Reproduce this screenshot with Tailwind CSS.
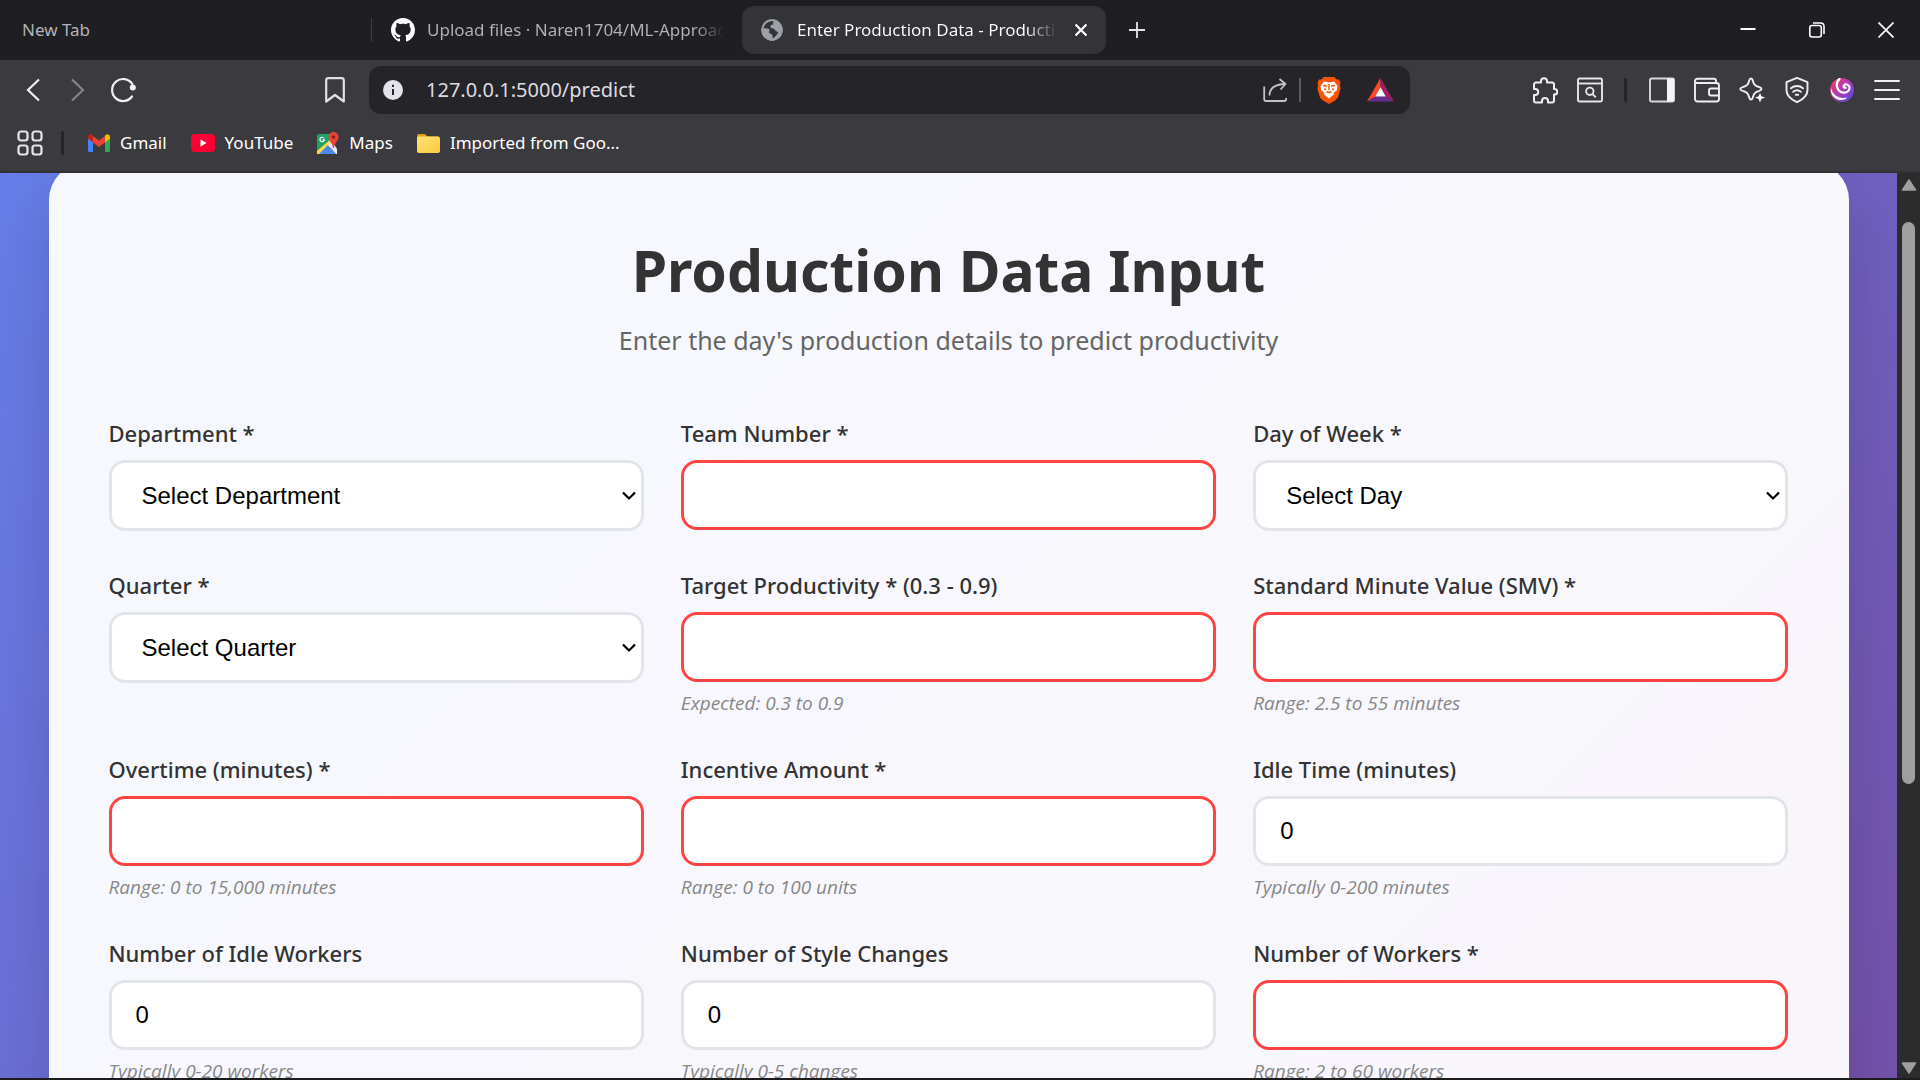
<!DOCTYPE html>
<html lang="en">
<head>
<meta charset="utf-8">
<title>Enter Production Data - Productivity Prediction</title>
<script src="https://cdn.jsdelivr.net/npm/@tailwindcss/browser@4"></script>
</head>
<body class="flex h-screen flex-col overflow-hidden bg-[#1c1c1c] font-['Noto_Sans',sans-serif]">

<!-- Tab strip -->
<header class="shrink-0 text-[17px] text-white">
  <div class="flex h-15 items-center bg-[#1f1e23]">
    <div class="w-[371px] pl-[22px] leading-6 text-[#b4b3b8]">New Tab</div>
    <div class="h-6 w-px bg-[#3f3e44]"></div>
    <div class="flex w-[358px] items-center gap-3 pl-[19px]">
      <svg class="size-6 shrink-0" viewBox="0 0 16 16" fill="#fff"><path d="M8 0C3.58 0 0 3.58 0 8c0 3.54 2.29 6.53 5.47 7.59.4.07.55-.17.55-.38 0-.19-.01-.82-.01-1.49-2.01.37-2.53-.49-2.69-.94-.09-.23-.48-.94-.82-1.13-.28-.15-.68-.52-.01-.53.63-.01 1.08.58 1.23.82.72 1.21 1.87.87 2.33.66.07-.52.28-.87.51-1.07-1.78-.2-3.64-.89-3.64-3.95 0-.87.31-1.59.82-2.15-.08-.2-.36-1.02.08-2.12 0 0 .67-.21 2.2.82.64-.18 1.32-.27 2-.27s1.36.09 2 .27c1.53-1.04 2.2-.82 2.2-.82.44 1.1.16 1.92.08 2.12.51.56.82 1.27.82 2.15 0 3.07-1.87 3.75-3.65 3.95.29.25.54.73.54 1.48 0 1.07-.01 1.93-.01 2.2 0 .21.15.46.55.38A8.01 8.01 0 0 0 16 8c0-4.42-3.58-8-8-8z"/></svg>
      <div class="w-[297px] overflow-hidden bg-linear-to-r from-[#b4b3b8] from-90% to-transparent bg-clip-text leading-6 whitespace-nowrap text-transparent">Upload files · Naren1704/ML-Approach</div>
    </div>
    <div class="ml-3 flex h-12 w-[364px] items-center rounded-xl bg-[#343338] pl-[19px]">
      <svg class="mr-3.5 size-[22px] shrink-0" viewBox="0 0 22 22"><circle cx="11" cy="11" r="10.7" fill="#9aa0a6"/><path d="M13.500 2.600C12 3 11.500 4.500 12.500 5.500c-2.500-.5-3.500 1.500-2.800 3 .8 1.300 3.800.6 4.300 2.600.3 1.500 2.200 1.200 3.200 2.400-1.300 2.500-3 4.500-5 5.800-1.200-.8-.6-2.300-1.200-3.400-.8-1.200-2.600-1-3.200-2.500-.4-1.200.8-2 .4-3C7.700 9.400 5 9.500 2.500 9.300 3 5.500 6.500 2 10.800 2z" fill="#343338"/><path d="M3 9.500c2 .8 4.800.2 5.500 1.200.6 1-.6 1.800-.3 2.800.5 1.400 2.800 1.200 3.300 2.600.4 1.200-.4 2.600.6 3.400-4 1-8-1.800-9.300-5.500z" fill="#9aa0a6" opacity=".55"/><circle cx="11" cy="11" r="9.800" fill="none" stroke="#9aa0a6" stroke-width="1.800"/></svg>
      <div class="w-[260px] overflow-hidden bg-linear-to-r from-white from-88% to-transparent bg-clip-text leading-6 whitespace-nowrap text-transparent">Enter Production Data - Productivity</div>
      <button aria-label="Close tab" class="ml-3 flex size-6 items-center justify-center"><svg class="size-3" viewBox="0 0 12 12" stroke="#fff" stroke-width="2.2"><path d="M.5.5l11 11M11.500.500l-11 11"/></svg></button>
    </div>
    <button aria-label="New tab" class="ml-[19px] flex size-6 items-center justify-center"><svg class="size-4" viewBox="0 0 16 16" stroke="#e6e6ea" stroke-width="1.800"><path d="M8 0v16M0 8h16"/></svg></button>
    <div class="ml-auto flex">
      <button aria-label="Minimize" class="flex h-15 w-[69px] items-center justify-center"><svg class="size-4" viewBox="0 0 16 16" stroke="#fff" stroke-width="2"><path d="M.5 7h15"/></svg></button>
      <button aria-label="Restore" class="flex h-15 w-[69px] items-center justify-center"><svg class="size-4" viewBox="0 0 16 16" fill="none" stroke="#fff" stroke-width="1.600"><rect x=".8" y="3.500" width="11.500" height="11.500" rx="2.200"/><path d="M4 1h7.500C13.500 1 15 2.500 15 4.500V12"/></svg></button>
      <button aria-label="Close" class="flex h-15 w-[69px] items-center justify-center"><svg class="size-4" viewBox="0 0 16 16" stroke="#fff" stroke-width="1.700"><path d="M.5.5l15 15M15.500.500l-15 15"/></svg></button>
    </div>
  </div>

  <!-- Toolbar -->
  <div class="flex h-15 items-center bg-[#3b3a3f] pr-[11px] pl-2.5">
    <button aria-label="Back" class="flex size-[45px] items-center justify-center"><svg class="h-6 w-4" viewBox="0 0 16 24" fill="none" stroke="#f0f0f4" stroke-width="2.200"><path d="M14 1.500L3 12l11 10.500"/></svg></button>
    <button aria-label="Forward" class="flex size-[45px] items-center justify-center"><svg class="h-6 w-4" viewBox="0 0 16 24" fill="none" stroke="#85848a" stroke-width="2.200"><path d="M2 1.500L13 12 2 22.500"/></svg></button>
    <button aria-label="Reload" class="flex size-[45px] items-center justify-center"><svg class="size-[26px]" viewBox="0 0 26 26" fill="none" stroke="#f0f0f4" stroke-width="2.200" stroke-linecap="round"><path d="M22 19.500A11 11 0 1 1 22.300 7"/><circle cx="22.800" cy="10.500" r="3" fill="#f0f0f4" stroke="none"/></svg></button>
    <button aria-label="Bookmark this page" class="ml-[167px] flex size-[45px] items-center justify-center"><svg class="h-[26px] w-5" viewBox="0 0 20 26" fill="none" stroke="#e0e0e6" stroke-width="2.200" stroke-linejoin="round"><path d="M1.200 24.500V3.500A2.300 2.300 0 0 1 3.500 1.200h13a2.300 2.300 0 0 1 2.300 2.300v21L10 18z"/></svg></button>
    <div class="mr-28 ml-3 flex h-12 min-w-0 flex-1 items-center rounded-xl bg-[#252429] pr-4 pl-3.5">
      <svg class="mr-[23px] size-5 shrink-0" viewBox="0 0 20 20"><circle cx="10" cy="10" r="10" fill="#e4e3ea"/><path d="M10 9v6M10 4.800v2.300" stroke="#252429" stroke-width="2"/></svg>
      <input aria-label="Address" type="text" value="127.0.0.1:5000/predict" class="min-w-0 flex-1 bg-transparent text-[20px] leading-7 text-[#dcdce2] outline-none">
      <svg class="size-6 shrink-0" viewBox="0 0 24 24" fill="none" stroke="#c3c2c8" stroke-width="1.800" stroke-linejoin="round"><path d="M1.200 8.500V21a2 2 0 0 0 2 2h18a2 2 0 0 0 2-2v-1M6.500 17.500c0-7 5-11 15-11.500M16.500 1l6 5-5 5.500"/></svg>
      <div class="ml-3 h-6 w-0.5 bg-[#5d5c62]"></div>
      <svg class="ml-4 h-7 w-6 shrink-0" viewBox="0 0 24 28"><path d="M6.500 1h11l2 2.500 2.500 0 1.500 3.500-.5 2 .5 4-2.500 8.500-3 3L12 28l-6-3.500-3-3L.5 13 1 9 .5 7 2 3.500l2.500 0z" fill="#fb5304"/><path d="M7 5.500l5 1 5-1 3.500 4.500-.8 4.500-3 2 .2 2L12 22.500 7.100 18.500l.2-2-3-2L3.500 10z" fill="#fff"/><path d="M6 9.500l4 .8M18 9.500l-4 .8M12 8v6M9.500 15.500l2.500 1.200 2.500-1.200M7 13l2 .5M17 13l-2 .5" stroke="#fb5304" stroke-width="1.400" fill="none"/></svg>
      <svg class="ml-[26px] h-6 w-[27px] shrink-0" viewBox="0 0 27 24"><path d="M13.500 0L0 23.500l8.500-5 5-9z" fill="#ff4724"/><path d="M13.500 0L27 23.500l-8.500-5-5-9z" fill="#9e1f63"/><path d="M0 23.500h27l-8.500-5h-10z" fill="#662d91"/><path d="M13.500 9.200l5.200 9.300H8.300z" fill="#fff"/></svg>
    </div>
    <button aria-label="Extensions" class="flex size-[45px] items-center justify-center"><svg class="size-[27px]" viewBox="0 0 27 27" fill="none" stroke="#efeff3" stroke-width="2" stroke-linejoin="round"><path d="M5 5.500h5V4.200a3 3 0 0 1 6 0v1.300h5a2 2 0 0 1 2 2V12h.5a2.800 2.800 0 0 1 0 5.600H23v5.900a2 2 0 0 1-2 2h-4V24a3 3 0 0 0-6 0v1.500H5a2 2 0 0 1-2-2V18h1.200a3 3 0 0 0 0-6H3V7.500a2 2 0 0 1 2-2z"/></svg></button>
    <button aria-label="Search tabs" class="flex size-[45px] items-center justify-center"><svg class="size-[26px]" viewBox="0 0 26 26" fill="none" stroke="#e6e6ea" stroke-width="1.900"><rect x="1" y="1.500" width="24" height="23" rx="1.500"/><path d="M1 6.500h24"/><circle cx="12.800" cy="14.300" r="3.700"/><path d="M15.500 17l3.300 3.300"/></svg></button>
    <div class="mx-3 h-6 w-[3px] rounded-full bg-[#242328]"></div>
    <button aria-label="Sidebar" class="flex size-[45px] items-center justify-center"><svg class="size-[26px]" viewBox="0 0 26 26"><rect x="1" y="1.500" width="24" height="23" rx="1.500" fill="none" stroke="#d8d8de" stroke-width="1.900"/><path d="M18 1.500h7v23h-7z" fill="#f4f4f8"/></svg></button>
    <button aria-label="Wallet" class="flex size-[45px] items-center justify-center"><svg class="size-[26px]" viewBox="0 0 26 26" fill="none" stroke="#efeff3" stroke-width="1.900" stroke-linejoin="round"><path d="M1 3.500V22a2.500 2.500 0 0 0 2.500 2.500h19A2.500 2.500 0 0 0 25 22V8.500A2.500 2.500 0 0 0 22.500 6h-20A2 2 0 0 1 1 4 2.500 2.500 0 0 1 3 1.800h17a2 2 0 0 1 2 2V6M25 11.500h-8a2 2 0 0 0-2 2v3a2 2 0 0 0 2 2h8"/></svg></button>
    <button aria-label="Leo assistant" class="flex size-[45px] items-center justify-center"><svg class="size-[26px]" viewBox="0 0 26 26"><path d="M12 1.500c1 0 1.500.8 1.800 2 1 4 2.200 5.500 6.500 6.700 1.300.4 2.200.9 2.200 1.800s-.9 1.400-2.200 1.800c-4.300 1.200-5.500 2.700-6.500 6.700-.3 1.200-.8 2-1.800 2s-1.500-.8-1.800-2c-1-4-2.200-5.500-6.500-6.700C2.400 13.400 1.200 12.900 1.200 12s1.200-1.400 2.500-1.800c4.300-1.200 5.500-2.700 6.500-6.700.3-1.200.8-2 1.800-2z" fill="none" stroke="#efeff3" stroke-width="1.900"/><circle cx="21" cy="21" r="5" fill="#3b3a3f"/><path d="M21 16l1.400 3.300L26 20.500l-3.600 1.400L21 25.500l-1.400-3.600L16 20.500l3.600-1.200z" fill="#fff"/></svg></button>
    <button aria-label="VPN" class="flex size-[45px] items-center justify-center"><svg class="size-[26px]" viewBox="0 0 26 26" fill="none" stroke="#efeff3" stroke-width="1.900" stroke-linecap="round" stroke-linejoin="round"><path d="M13 .9l10.500 4.300v8c0 5-3.500 8.800-10.500 12-7-3.200-10.500-7-10.500-12v-8z"/><path d="M7 11.300c3.500-3 8.500-3 12 0M9.200 14.800c2.300-1.900 5.300-1.900 7.600 0"/><path d="M11.800 17.800h2.400"/></svg></button>
    <button aria-label="Profile" class="flex size-[45px] items-center justify-center"><svg class="size-6" viewBox="0 0 24 24"><defs><linearGradient id="swirl" x1="0" y1="0" x2="1" y2="1"><stop offset="0" stop-color="#f2404e"/><stop offset=".45" stop-color="#b637b4"/><stop offset="1" stop-color="#4b4fe0"/></linearGradient></defs><circle cx="12" cy="12" r="12" fill="url(#swirl)"/><path d="M9.500 1C5.500 4 6 11.500 11 14c4.500 2 8.800-.8 8.500-4.500-.3-3-4-4.200-5.500-2.200-1 1.500.2 3 1.700 2.500" fill="none" stroke="#fff" stroke-width="2.200" stroke-linecap="round"/><path d="M1 10c1.500 7 8 11.500 16.500 9.500-3 3-8 3.200-11.500 1.200C2.500 18.500 0 14.500 1 10z" fill="#fff"/></svg></button>
    <button aria-label="Menu" class="flex size-[45px] items-center justify-center"><svg class="size-[26px]" viewBox="0 0 26 26" stroke="#f0f0f4" stroke-width="2" stroke-linecap="round"><path d="M1 4h24M1 13h24M1 22h24"/></svg></button>
  </div>

  <!-- Bookmarks bar -->
  <nav class="flex h-[53px] items-start border-b-2 border-[#323136] bg-[#3b3a3f] pt-[11px] pl-[17px] leading-6">
    <div class="flex h-6 items-center gap-6">
      <div class="flex items-center gap-[18px]">
        <button aria-label="All bookmarks"><svg class="block size-[26px]" viewBox="0 0 26 26" fill="none" stroke="#e6e6ea" stroke-width="2.200"><rect x="1.500" y="1.500" width="9" height="9" rx="2.500"/><rect x="15.500" y="1.500" width="9" height="9" rx="2.500"/><rect x="1.500" y="15.500" width="9" height="9" rx="2.500"/><rect x="15.500" y="15.500" width="9" height="9" rx="2.500"/></svg></button>
        <div class="h-6 w-[3px] rounded-full bg-[#242328]"></div>
      </div>
      <a href="#" class="flex items-center gap-2.5"><svg class="h-[18px] w-[22px]" viewBox="0 0 22 18"><path d="M0 3v13.500c0 .8.700 1.500 1.500 1.500H5V8z" fill="#4285f4"/><path d="M22 3v13.500c0 .8-.7 1.500-1.500 1.500H17V8z" fill="#34a853"/><path d="M17 2v6.500l5-3.800V3c0-2.500-3-3.500-4.500-2z" fill="#fbbc04"/><path d="M5 8.500V2l6 4.500L17 2v6.500L11 13z" fill="#ea4335"/><path d="M0 3v1.700l5 3.800V2L4.500 1C3-.5 0 .5 0 3z" fill="#c5221f"/></svg>Gmail</a>
      <a href="#" class="flex items-center gap-2.5"><svg class="h-[18px] w-6" viewBox="0 0 24 18"><rect width="24" height="18" rx="4" fill="#ff0033"/><path d="M9.500 5.200v7.600l6-3.800z" fill="#fff"/></svg>YouTube</a>
      <a href="#" class="flex items-center gap-2.5"><svg class="h-[23px] w-[22px]" viewBox="0 0 22 23"><path d="M0 4a2 2 0 0 1 2-2h13l3 8L3 22H2a2 2 0 0 1-2-2z" fill="#1fa463"/><path d="M0 19L15 6l4 4L3 22H0z" fill="#ffd54b"/><path d="M2 22l9-9 8 9z" fill="#4a89f4"/><path d="M11 13l4-4 5 8v5h-1z" fill="#e8eaed"/><path d="M6.800 6a2.200 2.200 0 1 0 .5 1.900H5.500" fill="none" stroke="#fff" stroke-width="1.200"/><path d="M16.500 0A5 5 0 0 1 21.500 5c0 4-4 5.500-4.500 11h-1c-.5-5.500-4.500-7-4.500-11a5 5 0 0 1 5-5z" fill="#ea4335"/><circle cx="16.500" cy="5" r="1.800" fill="#8c1d18"/></svg>Maps</a>
      <a href="#" class="flex items-center gap-2.5"><svg class="h-[19px] w-[23px]" viewBox="0 0 23 19"><defs><linearGradient id="folder" x1="0" y1="0" x2="1" y2="1"><stop offset="0" stop-color="#ffe27a"/><stop offset="1" stop-color="#fbc93b"/></linearGradient></defs><path d="M0 2a2 2 0 0 1 2-2h6l2.500 2.500H21v6H0z" fill="#e5a00d"/><rect y="2.500" width="23" height="16.500" rx="2" fill="url(#folder)"/></svg>Imported from Goo...</a>
    </div>
  </nav>
</header>

<!-- Page viewport -->
<div class="mb-0.5 flex min-h-0 flex-1">
  <main class="min-w-0 flex-1 overflow-hidden">
    <div class="-mt-[50px] min-h-[1390px] bg-linear-[135deg,#667eea_0%,#764ba2_100%] px-12 pt-[39px]">
      <section class="mx-auto min-h-[1310px] max-w-[1800px] rounded-[38px] bg-white/95 px-15 pt-15 shadow-[0_31px_62px_rgba(0,0,0,0.15)]">
        <h1 class="text-center text-[57px] leading-24 font-bold text-[#333]">Production Data Input</h1>
        <p class="mt-0.5 text-center text-[25px] leading-10 text-[#666]">Enter the day's production details to predict productivity</p>

        <form class="mt-[57px] grid grid-cols-3 gap-x-[37px] gap-y-[38px] text-[22px] leading-8 text-[#333]">
          <div>
            <label for="department" class="block font-medium">Department *</label>
            <div class="relative mt-[11px]">
              <select id="department" class="block h-[71px] w-full appearance-none rounded-2xl border-3 border-[#e1e5e9] bg-white px-[30px] font-['Liberation_Sans',sans-serif] text-2xl text-black"><option>Select Department</option></select>
              <svg class="pointer-events-none absolute top-[31px] right-2 h-2.5 w-3.5" viewBox="0 0 14 10" fill="none" stroke="#000" stroke-width="2.200"><path d="M1 1.500l6 6 6-6"/></svg>
            </div>
          </div>
          <div>
            <label for="team" class="block font-medium">Team Number *</label>
            <input id="team" type="number" class="mt-[11px] block h-[70px] w-full rounded-2xl border-3 border-[#ff4444] bg-white px-6 font-['Liberation_Sans',sans-serif] text-2xl text-black">
          </div>
          <div>
            <label for="day" class="block font-medium">Day of Week *</label>
            <div class="relative mt-[11px]">
              <select id="day" class="block h-[71px] w-full appearance-none rounded-2xl border-3 border-[#e1e5e9] bg-white px-[30px] font-['Liberation_Sans',sans-serif] text-2xl text-black"><option>Select Day</option></select>
              <svg class="pointer-events-none absolute top-[31px] right-2 h-2.5 w-3.5" viewBox="0 0 14 10" fill="none" stroke="#000" stroke-width="2.200"><path d="M1 1.500l6 6 6-6"/></svg>
            </div>
          </div>

          <div>
            <label for="quarter" class="block font-medium">Quarter *</label>
            <div class="relative mt-[11px]">
              <select id="quarter" class="block h-[71px] w-full appearance-none rounded-2xl border-3 border-[#e1e5e9] bg-white px-[30px] font-['Liberation_Sans',sans-serif] text-2xl text-black"><option>Select Quarter</option></select>
              <svg class="pointer-events-none absolute top-[31px] right-2 h-2.5 w-3.5" viewBox="0 0 14 10" fill="none" stroke="#000" stroke-width="2.200"><path d="M1 1.500l6 6 6-6"/></svg>
            </div>
          </div>
          <div>
            <label for="target" class="block font-medium">Target Productivity * (0.3 - 0.9)</label>
            <input id="target" type="number" class="mt-[11px] block h-[70px] w-full rounded-2xl border-3 border-[#ff4444] bg-white px-6 font-['Liberation_Sans',sans-serif] text-2xl text-black">
            <p class="mt-[9px] font-['Open_Sans',sans-serif] text-[19px] leading-6 text-[#888] italic">Expected: 0.3 to 0.9</p>
          </div>
          <div>
            <label for="smv" class="block font-medium">Standard Minute Value (SMV) *</label>
            <input id="smv" type="number" class="mt-[11px] block h-[70px] w-full rounded-2xl border-3 border-[#ff4444] bg-white px-6 font-['Liberation_Sans',sans-serif] text-2xl text-black">
            <p class="mt-[9px] font-['Open_Sans',sans-serif] text-[19px] leading-6 text-[#888] italic">Range: 2.5 to 55 minutes</p>
          </div>

          <div>
            <label for="overtime" class="block font-medium">Overtime (minutes) *</label>
            <input id="overtime" type="number" class="mt-[11px] block h-[70px] w-full rounded-2xl border-3 border-[#ff4444] bg-white px-6 font-['Liberation_Sans',sans-serif] text-2xl text-black">
            <p class="mt-[9px] font-['Open_Sans',sans-serif] text-[19px] leading-6 text-[#888] italic">Range: 0 to 15,000 minutes</p>
          </div>
          <div>
            <label for="incentive" class="block font-medium">Incentive Amount *</label>
            <input id="incentive" type="number" class="mt-[11px] block h-[70px] w-full rounded-2xl border-3 border-[#ff4444] bg-white px-6 font-['Liberation_Sans',sans-serif] text-2xl text-black">
            <p class="mt-[9px] font-['Open_Sans',sans-serif] text-[19px] leading-6 text-[#888] italic">Range: 0 to 100 units</p>
          </div>
          <div>
            <label for="idle-time" class="block font-medium">Idle Time (minutes)</label>
            <input id="idle-time" type="number" value="0" class="mt-[11px] block h-[70px] w-full rounded-2xl border-3 border-[#e1e5e9] bg-white px-6 font-['Liberation_Sans',sans-serif] text-2xl text-black">
            <p class="mt-[9px] font-['Open_Sans',sans-serif] text-[19px] leading-6 text-[#888] italic">Typically 0-200 minutes</p>
          </div>

          <div>
            <label for="idle-workers" class="block font-medium">Number of Idle Workers</label>
            <input id="idle-workers" type="number" value="0" class="mt-[11px] block h-[70px] w-full rounded-2xl border-3 border-[#e1e5e9] bg-white px-6 font-['Liberation_Sans',sans-serif] text-2xl text-black">
            <p class="mt-[9px] font-['Open_Sans',sans-serif] text-[19px] leading-6 text-[#888] italic">Typically 0-20 workers</p>
          </div>
          <div>
            <label for="style-changes" class="block font-medium">Number of Style Changes</label>
            <input id="style-changes" type="number" value="0" class="mt-[11px] block h-[70px] w-full rounded-2xl border-3 border-[#e1e5e9] bg-white px-6 font-['Liberation_Sans',sans-serif] text-2xl text-black">
            <p class="mt-[9px] font-['Open_Sans',sans-serif] text-[19px] leading-6 text-[#888] italic">Typically 0-5 changes</p>
          </div>
          <div>
            <label for="workers" class="block font-medium">Number of Workers *</label>
            <input id="workers" type="number" class="mt-[11px] block h-[70px] w-full rounded-2xl border-3 border-[#ff4444] bg-white px-6 font-['Liberation_Sans',sans-serif] text-2xl text-black">
            <p class="mt-[9px] font-['Open_Sans',sans-serif] text-[19px] leading-6 text-[#888] italic">Range: 2 to 60 workers</p>
          </div>
        </form>
      </section>
    </div>
  </main>

  <!-- Scrollbar -->
  <div class="flex w-[23px] flex-col items-center justify-between bg-[#2c2c2c] pt-1.5 pb-1">
    <svg class="h-3 w-4" viewBox="0 0 16 12" fill="#9f9f9f" stroke="#9f9f9f" stroke-width="1.500" stroke-linejoin="round"><path d="M8 1l6.500 10h-13z"/></svg>
    <div class="flex min-h-0 w-[13px] flex-1 flex-col pt-[31px] pb-[278px]"><div class="flex-1 rounded-full bg-[#9f9f9f]"></div></div>
    <svg class="h-3 w-4" viewBox="0 0 16 12" fill="#9f9f9f" stroke="#9f9f9f" stroke-width="1.500" stroke-linejoin="round"><path d="M8 11l6.500-10h-13z"/></svg>
  </div>
</div>
</body>
</html>
